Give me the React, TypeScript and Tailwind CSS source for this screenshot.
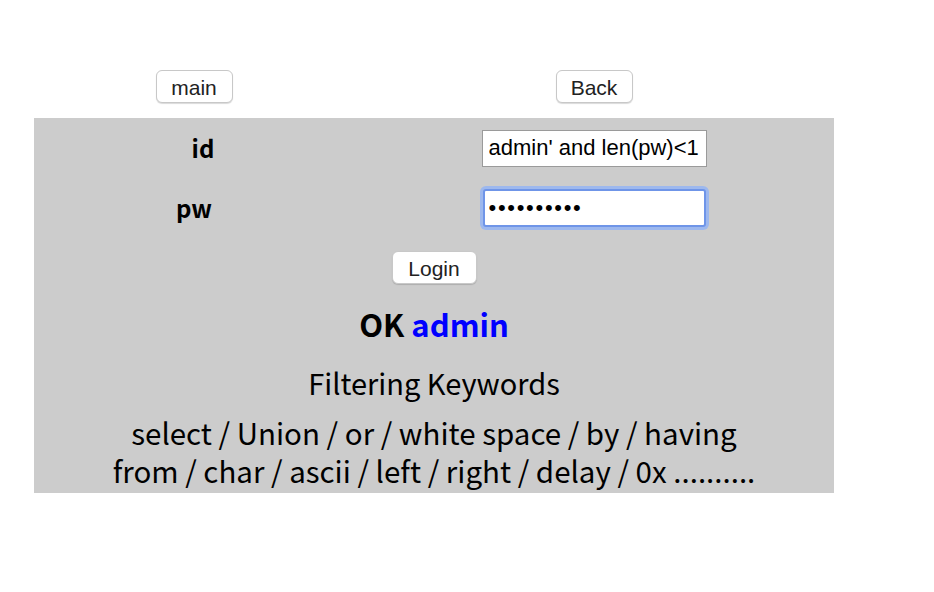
import React from "react";

const ko = { fontFamily: '"Noto Sans CJK KR", "Noto Sans", sans-serif' };
const helv = { fontFamily: '"Liberation Sans", Arial, sans-serif' };

function Btn({ label, w }: { label: string; w: string }) {
  return (
    <button
      style={helv}
      className={`${w} h-[33px] rounded-[6px] border border-[#c8c8c8] bg-white pt-[2px] text-[21px] leading-none text-[#222] shadow-[0_1px_1px_rgba(0,0,0,0.15)]`}
    >
      {label}
    </button>
  );
}

export default function App() {
  return (
    <div className="h-[592px] w-[934px] bg-white pt-[70px]">
      {/* top links */}
      <div className="ml-[34px] flex w-[800px]">
        <div className="flex w-[320px] justify-center">
          <Btn label="main" w="w-[77px]" />
        </div>
        <div className="flex w-[480px] justify-center">
          <Btn label="Back" w="w-[77px]" />
        </div>
      </div>

      {/* login box */}
      <div className="ml-[34px] mt-[15px] flex h-[375px] w-[800px] flex-col bg-[#cccccc] text-black">
        <div className="flex h-[60px] items-center">
          <div style={ko} className="w-[320px] pl-[18px] text-center text-[24px] font-bold">
            id
          </div>
          <div className="flex w-[480px] justify-center">
            <input
              readOnly
              value="admin' and len(pw)<1"
              style={helv}
              className="h-[37px] w-[225px] border border-[#9a9a9a] bg-white px-[6px] text-[22px] text-black outline-none"
            />
          </div>
        </div>
        <div className="flex h-[60px] items-center">
          <div style={ko} className="w-[320px] text-center text-[24px] font-bold">
            pw
          </div>
          <div className="flex w-[480px] justify-center">
            <input
              readOnly
              type="password"
              value="aaaaaaaaaa"
              style={helv}
              className="h-[38px] w-[223px] rounded-[3px] border-2 border-[#6f95e8] bg-white px-[4px] text-[22px] tracking-[1.7px] text-black outline-none ring-[3px] ring-[#9db8ee]"
            />
          </div>
        </div>

        <div className="mt-[13px] flex justify-center">
          <Btn label="Login" w="w-[85px]" />
        </div>

        <div style={ko} className="mt-[16px] text-center text-[31px] font-bold leading-[48px]">
          OK <span className="text-[#0000ff]">admin</span>
        </div>

        <div style={ko} className="mt-[12px] text-center text-[29px] leading-[44px]">
          Filtering Keywords
        </div>

        <div style={ko} className="mt-[9px] text-center text-[29.5px] leading-[38px]">
          select / Union / or / white space / by / having
          <br />
          from / char / ascii / left / right / delay / 0x ..........
        </div>
      </div>
    </div>
  );
}
